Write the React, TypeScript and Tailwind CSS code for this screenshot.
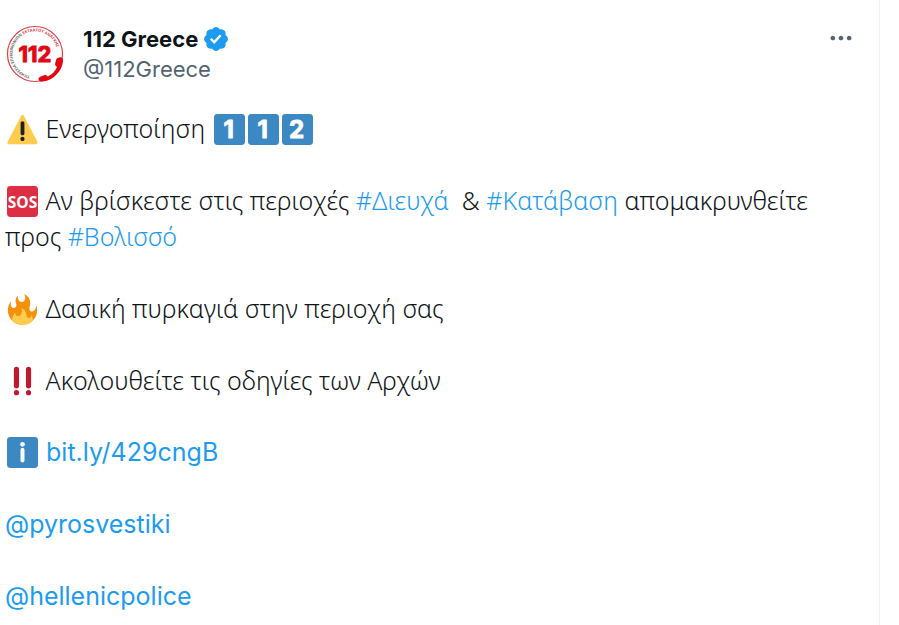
import type { ReactNode } from 'react';

function Emoji({ label, children }: { label: string; children: ReactNode }) {
  return (
    <svg
      role="img"
      aria-label={label}
      viewBox="0 0 36 36"
      className="mr-px ml-0.5 inline-block size-[31px] align-[-7px] leading-none"
    >
      {children}
    </svg>
  );
}

function Keycap({ digit }: { digit: string }) {
  return (
    <Emoji label={`Keycap ${digit}`}>
      <rect width="36" height="36" rx="4" fill="#3B88C3" />
      <text
        x="17"
        y="28"
        textAnchor="middle"
        fill="#fff"
        stroke="#fff"
        strokeWidth="1"
        strokeLinejoin="round"
        className="font-['Inter',sans-serif] text-[28px] font-bold"
      >
        {digit}
      </text>
    </Emoji>
  );
}

function Warning() {
  return (
    <Emoji label="Warning">
      <path
        fill="#FFCC4D"
        d="M2.653 35C.811 35-.001 33.662.847 32.027L16.456 1.972c.849-1.635 2.238-1.635 3.087 0l15.609 30.056c.85 1.634.037 2.972-1.805 2.972H2.653z"
      />
      <path
        fill="#231F20"
        d="M15.583 28.953c0-1.333 1.085-2.418 2.419-2.418 1.333 0 2.418 1.085 2.418 2.418 0 1.334-1.086 2.419-2.418 2.419-1.334 0-2.419-1.086-2.419-2.419zm.186-18.293c0-1.302.961-2.108 2.232-2.108 1.241 0 2.233.837 2.233 2.108v11.938c0 1.271-.992 2.108-2.233 2.108-1.271 0-2.232-.807-2.232-2.108V10.66z"
      />
    </Emoji>
  );
}

function Sos() {
  return (
    <Emoji label="SOS">
      <rect width="36" height="36" rx="4" fill="#DD2E44" />
      <text
        x="18"
        y="25"
        textAnchor="middle"
        fill="#fff"
        className="font-['Open_Sans',sans-serif] text-[18px] font-bold"
      >
        SOS
      </text>
    </Emoji>
  );
}

function Fire() {
  return (
    <Emoji label="Fire">
      <path
        fill="#F4900C"
        d="M35 19c0-2.062-.367-4.039-1.04-5.868-.46 5.389-3.333 8.157-6.335 6.868-2.812-1.208-.917-5.917-.777-8.164.236-3.809-.012-8.169-6.931-11.794 2.875 5.5.333 8.917-2.333 9.125-2.958.231-5.667-2.542-4.667-7.042-3.238 2.386-3.332 6.402-2.333 9 1.042 2.708-.042 4.958-2.583 5.208-2.84.28-4.418-3.041-2.963-8.333C2.52 10.965 1 14.805 1 19c0 9.389 7.611 17 17 17s17-7.611 17-17z"
      />
      <path
        fill="#FFCC4D"
        d="M28.394 23.999c.148 3.084-2.561 4.293-4.019 3.709-2.106-.843-1.541-2.291-2.083-5.291s-2.625-5.083-5.708-6c2.25 6.333-1.247 8.667-3.08 9.084-1.872.426-3.753-.001-3.968-4.007C7.352 23.668 6 26.676 6 30c0 .368.023.73.055 1.09C9.125 34.124 13.342 36 18 36s8.875-1.876 11.945-4.91c.032-.36.055-.722.055-1.09 0-2.187-.584-4.236-1.606-6.001z"
      />
    </Emoji>
  );
}

function DoubleExclamation() {
  return (
    <Emoji label="Double exclamation">
      <g fill="#BE1931">
        <rect x="8" y="1" width="6" height="25" rx="3" />
        <circle cx="11" cy="31" r="3" />
        <rect x="22" y="1" width="6" height="25" rx="3" />
        <circle cx="25" cy="31" r="3" />
      </g>
    </Emoji>
  );
}

function Info() {
  return (
    <Emoji label="Information">
      <rect width="36" height="36" rx="4" fill="#3B88C3" />
      <g fill="#fff">
        <circle cx="18" cy="8.5" r="2.7" />
        <rect x="15.7" y="12.5" width="4.6" height="17" rx="2.3" />
      </g>
    </Emoji>
  );
}

function Avatar() {
  return (
    <svg role="img" aria-label="112 Greece" viewBox="-1 -1 60 60" className="size-[60px] shrink-0 leading-none">
      <defs>
        <path id="ring" d="M24 50.900 A22.500 22.500 0 1 1 51.400 31" />
      </defs>
      <circle cx="29" cy="29" r="27.5" fill="#fff" stroke="#d9434b" strokeWidth="1.2" />
      <text className="font-['Open_Sans',sans-serif] text-[4px] font-bold">
        <textPath href="#ring" startOffset="0">
          <tspan fill="#666">ΥΠΗΡΕΣΙΑ ΕΠΙΚΟΙΝΩΝΙΩΝ</tspan>
          <tspan fill="#d9434b"> ΕΚΤΑΚΤΟΥ ΑΝΑΓΚΗΣ</tspan>
        </textPath>
      </text>
      <text
        x="29"
        y="37"
        textAnchor="middle"
        fill="#e30613"
        stroke="#e30613"
        strokeWidth="1"
        className="font-['Inter',sans-serif] text-[22px] font-bold"
      >
        112
      </text>
      <path
        fill="#e30613"
        d="M53.500 32.500c2.300-.6 3.800.8 3.500 4.100C56 46 47.500 55.500 37 56.500c-2.500.2-4.300-.8-4.500-2.300-.2-1.200.7-2.200 2.300-2.800l3.200-1.100c1.400-.5 2.700-.1 3.700 1.200 4.400-2 7.400-5 9.300-9.500-1.500-.8-2.100-1.900-1.800-3.400l.9-3.500c.4-1.500 1.400-2.300 3.400-2.600z"
      />
    </svg>
  );
}

function VerifiedBadge() {
  return (
    <svg role="img" aria-label="Verified account" viewBox="0 0 22 22" className="size-7 shrink-0">
      <path
        fill="#1d9bf0"
        d="M20.396 11c-.018-.646-.215-1.275-.57-1.816-.354-.54-.852-.972-1.438-1.246.223-.607.27-1.264.14-1.897-.131-.634-.437-1.218-.882-1.687-.47-.445-1.053-.75-1.687-.882-.633-.13-1.29-.083-1.897.14-.273-.587-.704-1.086-1.245-1.44S11.647 1.62 11 1.604c-.646.017-1.273.213-1.813.568s-.969.854-1.24 1.44c-.608-.223-1.267-.272-1.902-.14-.635.13-1.22.436-1.69.882-.445.47-.749 1.055-.878 1.688-.13.633-.08 1.29.144 1.896-.587.274-1.087.705-1.443 1.245-.356.54-.555 1.17-.574 1.817.02.647.218 1.276.574 1.817.356.54.856.972 1.443 1.245-.224.606-.274 1.263-.144 1.896.13.634.433 1.218.877 1.688.47.443 1.054.747 1.687.878.633.132 1.29.084 1.897-.136.274.586.705 1.084 1.246 1.439.54.354 1.17.551 1.816.569.647-.016 1.276-.213 1.817-.567s.972-.854 1.245-1.44c.604.239 1.266.296 1.903.164.636-.132 1.22-.447 1.68-.907.46-.46.776-1.044.908-1.681s.075-1.299-.165-1.903c.586-.274 1.084-.705 1.439-1.246.354-.54.551-1.17.569-1.816zM9.662 14.85l-3.429-3.428 1.293-1.302 2.072 2.072 4.4-4.794 1.347 1.246z"
      />
    </svg>
  );
}

function TextLink({ children }: { children: ReactNode }) {
  return (
    <a href="#" className="text-[#1d9bf0] hover:underline">
      {children}
    </a>
  );
}

export default function App() {
  return (
    <div className="min-h-screen bg-white pr-[19px]">
      <article className="min-h-screen border-r border-[#eff3f4] pt-6 pr-6 pl-[5px] text-[#0f1419]">
        <header className="flex items-start">
          <Avatar />
          <div className="ml-[18px] flex flex-col font-['Inter',sans-serif] text-[22px] leading-[30px]">
            <div className="flex items-center gap-1">
              <a href="#" className="font-bold">112 Greece</a>
              <VerifiedBadge />
            </div>
            <a href="#" className="text-[#536471]">@112Greece</a>
          </div>
          <button type="button" aria-label="More" className="ml-auto flex h-7 items-center text-[#536471]">
            <svg viewBox="0 0 24 24" fill="currentColor" className="size-7">
              <path d="M3 12c0-1.100.9-2 2-2s2 .9 2 2-.9 2-2 2-2-.9-2-2zm9 2c1.100 0 2-.9 2-2s-.9-2-2-2-2 .9-2 2 .9 2 2 2zm7 0c1.100 0 2-.9 2-2s-.9-2-2-2-2 .9-2 2 .9 2 2 2z" />
            </svg>
          </button>
        </header>
        <div className="mt-[26px] flex flex-col gap-9 text-[25px] leading-9">
          <div className="flex flex-col gap-9 font-['Noto_Sans',sans-serif] font-[350]">
            <p>
              <Warning /> Ενεργοποίηση <Keycap digit="1" />
              <Keycap digit="1" />
              <Keycap digit="2" />
            </p>
            <p>
              <Sos /> Αν βρίσκεστε στις περιοχές <TextLink>#Διευχά</TextLink>&nbsp; &amp;{' '}
              <TextLink>#Κατάβαση</TextLink> απομακρυνθείτε προς <TextLink>#Βολισσό</TextLink>
            </p>
            <p>
              <Fire /> Δασική πυρκαγιά στην περιοχή σας
            </p>
            <p>
              <DoubleExclamation /> Ακολουθείτε τις οδηγίες των Αρχών
            </p>
          </div>
          <div className="flex flex-col gap-9 font-['Inter',sans-serif]">
            <p>
              <Info /> <TextLink>bit.ly/429cngB</TextLink>
            </p>
            <p>
              <TextLink>@pyrosvestiki</TextLink>
            </p>
            <p>
              <TextLink>@hellenicpolice</TextLink>
            </p>
          </div>
        </div>
      </article>
    </div>
  );
}
